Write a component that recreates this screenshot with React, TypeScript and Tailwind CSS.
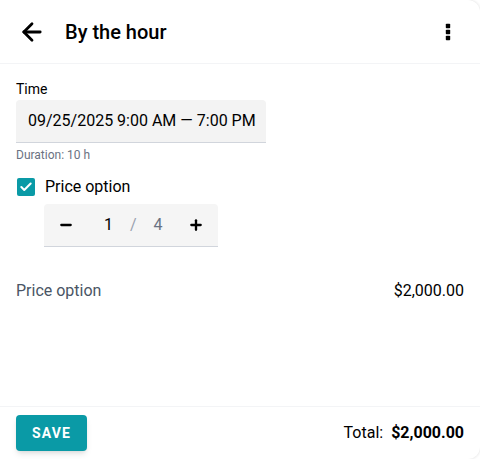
import { ArrowLeft, Check, Minus, Plus } from 'lucide-react';

function MoreVert() {
  return (
    <svg width="24" height="24" viewBox="0 0 24 24" className="ml-auto" fill="currentColor">
      <rect x="9.8" y="3.8" width="4.4" height="4.4" rx="0.8" />
      <rect x="9.8" y="9.8" width="4.4" height="4.4" rx="0.8" />
      <rect x="9.8" y="15.8" width="4.4" height="4.4" rx="0.8" />
    </svg>
  );
}

export default function App() {
  return (
    <main
      className="flex h-[459px] w-[480px] flex-col overflow-hidden rounded-r-xl bg-white text-black shadow-[0_0_3px_rgba(0,0,0,0.15)]"
      style={{ fontFamily: 'Roboto, "Liberation Sans", sans-serif' }}
    >
      <header className="flex h-16 shrink-0 items-center border-b border-gray-100 pl-[18px] pr-[20px]">
        <ArrowLeft size={28} strokeWidth={2.4} />
        <h1 className="ml-[19px] text-[20px] font-medium">By the hour</h1>
        <MoreVert />
      </header>

      <section className="flex flex-1 flex-col px-4 pt-[17px]">
        <label className="text-sm leading-4">Time</label>
        <div className="mt-[3px] flex h-[43px] w-[250px] items-center whitespace-nowrap rounded-t border-b border-gray-300 bg-[#f3f3f3] pl-3 text-base">
          09/25/2025 9:00 AM — 7:00 PM
        </div>
        <span className="mt-[4px] text-xs text-gray-500">Duration: 10 h</span>

        <div className="mt-[12px] flex items-center">
          <span className="ml-[1px] flex h-[18px] w-[18px] items-center justify-center rounded-[2px] bg-[#0a9aa6]">
            <Check size={14} strokeWidth={3.5} className="text-white" />
          </span>
          <span className="ml-[10px] text-base">Price option</span>
        </div>

        <div className="ml-7 mt-[5px] flex h-[43px] w-[174px] items-center rounded-t border-b border-gray-300 bg-[#f5f5f5] text-base">
          <Minus size={16} strokeWidth={3.5} className="ml-[14px]" />
          <span className="ml-[30px]">1</span>
          <span className="ml-[17px] text-gray-400">/</span>
          <span className="ml-[17px] text-gray-500">4</span>
          <Plus size={16} strokeWidth={3.5} className="ml-auto mr-[14px]" />
        </div>

        <div className="mt-[32px] flex items-center justify-between text-base">
          <span className="text-gray-600">Price option</span>
          <span>$2,000.00</span>
        </div>
      </section>

      <footer className="flex h-[53px] shrink-0 items-center justify-between border-t border-gray-100 px-4">
        <button className="h-9 rounded bg-[#0a9aa6] px-4 text-sm font-bold uppercase tracking-[0.08em] text-white shadow-md">
          Save
        </button>
        <div className="text-base">
          Total: <span className="ml-1 font-bold">$2,000.00</span>
        </div>
      </footer>
    </main>
  );
}
